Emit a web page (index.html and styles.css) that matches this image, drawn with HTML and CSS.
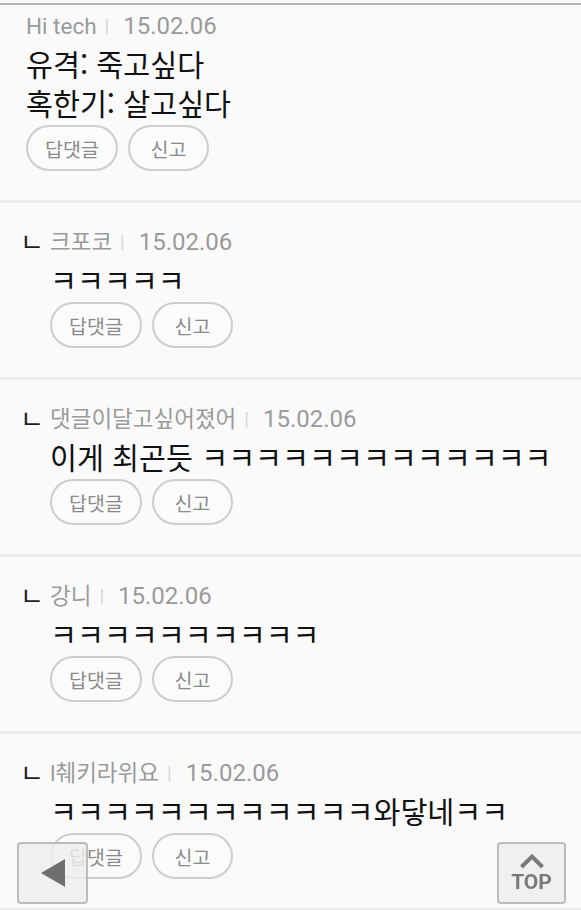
FILE: index.html
```html
<!DOCTYPE html>
<html lang="ko">
<head>
<meta charset="UTF-8">
<meta name="viewport" content="width=device-width, initial-scale=1.0">
<title>댓글</title>
<link rel="stylesheet" href="styles.css">
</head>
<body>
<div class="comment-list">
    <div class="comment first">
        <div class="comment-head">
            <span class="nick">Hi tech</span><span class="bar">|</span><span class="date">15.02.06</span>
        </div>
        <div class="comment-body">유격: 죽고싶다<br>혹한기: 살고싶다</div>
        <div class="comment-btns">
            <button class="btn btn-reply">답댓글</button>
            <button class="btn btn-report">신고</button>
        </div>
    </div>

    <div class="comment reply">
        <div class="comment-head">
            <span class="mark">ㄴ</span><span class="nick">크포코</span><span class="bar">|</span><span class="date">15.02.06</span>
        </div>
        <div class="comment-body">ㅋㅋㅋㅋㅋ</div>
        <div class="comment-btns">
            <button class="btn btn-reply">답댓글</button>
            <button class="btn btn-report">신고</button>
        </div>
    </div>

    <div class="comment reply">
        <div class="comment-head">
            <span class="mark">ㄴ</span><span class="nick">댓글이달고싶어졌어</span><span class="bar">|</span><span class="date">15.02.06</span>
        </div>
        <div class="comment-body">이게 최곤듯 ㅋㅋㅋㅋㅋㅋㅋㅋㅋㅋㅋㅋㅋ</div>
        <div class="comment-btns">
            <button class="btn btn-reply">답댓글</button>
            <button class="btn btn-report">신고</button>
        </div>
    </div>

    <div class="comment reply">
        <div class="comment-head">
            <span class="mark">ㄴ</span><span class="nick">강니</span><span class="bar">|</span><span class="date">15.02.06</span>
        </div>
        <div class="comment-body">ㅋㅋㅋㅋㅋㅋㅋㅋㅋㅋ</div>
        <div class="comment-btns">
            <button class="btn btn-reply">답댓글</button>
            <button class="btn btn-report">신고</button>
        </div>
    </div>

    <div class="comment reply">
        <div class="comment-head">
            <span class="mark">ㄴ</span><span class="nick">l췌키라위요</span><span class="bar">|</span><span class="date">15.02.06</span>
        </div>
        <div class="comment-body">ㅋㅋㅋㅋㅋㅋㅋㅋㅋㅋㅋㅋ와닿네ㅋㅋ</div>
        <div class="comment-btns">
            <button class="btn btn-reply">답댓글</button>
            <button class="btn btn-report">신고</button>
        </div>
    </div>
</div>

<button class="float-btn back-btn" aria-label="뒤로">
    <svg width="28" height="30" viewBox="0 0 28 30"><polygon points="26,1 26,29 2,15" fill="#6f6f6f"/></svg>
</button>
<button class="float-btn top-btn">
    <svg width="26" height="16" viewBox="0 0 26 16"><polyline points="2.5,14 13,3.5 23.5,14" fill="none" stroke="#7a7a7a" stroke-width="4"/></svg>
    <span>TOP</span>
</button>
</body>
</html>
```

FILE: styles.css
```css
body, html {
    margin: 0;
    height: 100%;
    overflow: hidden;
    background: #fafafa;
    font-family: Roboto, "Noto Sans CJK KR", sans-serif;
}
.comment-list {
    margin-top: 3px;
    border-top: 2px solid #b4b4b4;
}
.comment {
    padding: 6px 0 29px 26px;
    border-bottom: 3px solid #ececec;
}
.comment.reply {
    padding: 24px 0 29px 50px;
}
.comment-head {
    position: relative;
    height: 30px;
    line-height: 30px;
    font-size: 22.5px;
    color: #9a9a9a;
    white-space: nowrap;
}
.mark {
    position: absolute;
    left: -30px;
    top: -1px;
    color: #1e1e1e;
    font-size: 26px;
    font-family: "Noto Sans CJK KR", sans-serif;
}
.bar {
    color: #d6d6d6;
    font-size: 19px;
    margin: 0 14px 0 8px;
    position: relative;
    top: -2px;
}
.date {
    font-size: 24px;
}
.comment-body {
    margin-top: 3px;
    font-size: 29.3px;
    line-height: 39px;
    color: #111;
    font-family: "Noto Sans CJK KR", sans-serif;
    white-space: nowrap;
}
.comment-btns {
    margin-top: 3px;
    display: flex;
    gap: 10px;
}
.btn {
    height: 46px;
    border: 2px solid #cdcdcd;
    border-radius: 23px;
    background: #fbfbfb;
    color: #8a8a8a;
    font-size: 19.5px;
    font-family: "Noto Sans CJK KR", sans-serif;
    padding: 0;
}
.btn-reply {
    width: 92px;
}
.btn-report {
    width: 81px;
}
.float-btn {
    position: fixed;
    bottom: 6px;
    width: 71px;
    height: 62px;
    border: 2px solid rgba(170, 170, 170, 0.75);
    border-radius: 4px;
    background: rgba(238, 238, 238, 0.8);
    padding: 0;
    display: flex;
    flex-direction: column;
    align-items: center;
    justify-content: center;
}
.back-btn {
    left: 17px;
}
.top-btn {
    right: 15px;
    width: 69px;
}
.top-btn span {
    font-family: Roboto, sans-serif;
    font-weight: bold;
    font-size: 21px;
    color: #7a7a7a;
    line-height: 22px;
    margin-top: 2px;
}
```
